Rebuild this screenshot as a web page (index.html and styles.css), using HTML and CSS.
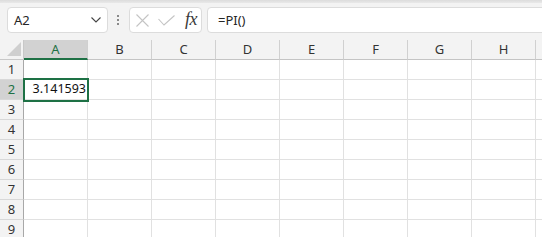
FILE: index.html
```html
<!DOCTYPE html>
<html>
<head>
<meta charset="utf-8">
<link rel="stylesheet" href="styles.css">
</head>
<body>
<div class="app">
  <div class="edge"></div>
  <div class="fbar">
    <div class="namebox">
      <span class="nb-text">A2</span>
      <svg class="chev" width="10" height="6" viewBox="0 0 10 6"><path d="M0.5 0.5 L5 5 L9.5 0.5" fill="none" stroke="#444" stroke-width="1.1"/></svg>
    </div>
    <div class="dots"><i></i><i></i><i></i></div>
    <div class="actions">
      <svg class="ic-x" width="13" height="13" viewBox="0 0 13 13"><path d="M0.5 0.5 L12.5 12.5 M12.5 0.5 L0.5 12.5" stroke="#c4c4c4" stroke-width="1.1" fill="none"/></svg>
      <svg class="ic-ok" width="17" height="11" viewBox="0 0 17 11"><path d="M0.5 4 L6 10 L16.5 0.5" stroke="#c4c4c4" stroke-width="1.1" fill="none"/></svg>
      <span class="fx">fx</span>
    </div>
    <div class="formula">=PI()</div>
  </div>
  <div class="grid">
    <div class="corner"><svg width="14" height="14" viewBox="0 0 14 14"><path d="M14 0 L14 14 L0 14 Z" fill="#cfcfcf"/></svg></div>
    <div class="ch sel">A</div>
    <div class="ch">B</div>
    <div class="ch">C</div>
    <div class="ch">D</div>
    <div class="ch">E</div>
    <div class="ch">F</div>
    <div class="ch">G</div>
    <div class="ch">H</div>
    <div class="ch"></div>

    <div class="rh">1</div><div class="c"></div><div class="c"></div><div class="c"></div><div class="c"></div><div class="c"></div><div class="c"></div><div class="c"></div><div class="c"></div><div class="c"></div>
    <div class="rh sel">2</div><div class="c num">3.141593</div><div class="c"></div><div class="c"></div><div class="c"></div><div class="c"></div><div class="c"></div><div class="c"></div><div class="c"></div><div class="c"></div>
    <div class="rh">3</div><div class="c"></div><div class="c"></div><div class="c"></div><div class="c"></div><div class="c"></div><div class="c"></div><div class="c"></div><div class="c"></div><div class="c"></div>
    <div class="rh">4</div><div class="c"></div><div class="c"></div><div class="c"></div><div class="c"></div><div class="c"></div><div class="c"></div><div class="c"></div><div class="c"></div><div class="c"></div>
    <div class="rh">5</div><div class="c"></div><div class="c"></div><div class="c"></div><div class="c"></div><div class="c"></div><div class="c"></div><div class="c"></div><div class="c"></div><div class="c"></div>
    <div class="rh">6</div><div class="c"></div><div class="c"></div><div class="c"></div><div class="c"></div><div class="c"></div><div class="c"></div><div class="c"></div><div class="c"></div><div class="c"></div>
    <div class="rh">7</div><div class="c"></div><div class="c"></div><div class="c"></div><div class="c"></div><div class="c"></div><div class="c"></div><div class="c"></div><div class="c"></div><div class="c"></div>
    <div class="rh">8</div><div class="c"></div><div class="c"></div><div class="c"></div><div class="c"></div><div class="c"></div><div class="c"></div><div class="c"></div><div class="c"></div><div class="c"></div>
    <div class="rh">9</div><div class="c"></div><div class="c"></div><div class="c"></div><div class="c"></div><div class="c"></div><div class="c"></div><div class="c"></div><div class="c"></div><div class="c"></div>

    <div class="selbox"></div>
  </div>
</div>
</body>
</html>
```

FILE: styles.css
```css
html, body {
  margin: 0;
  padding: 0;
  background: #ffffff;
}
* { box-sizing: border-box; }

.app {
  width: 542px;
  height: 237px;
  overflow: hidden;
  font-family: "Noto Sans", "Open Sans", sans-serif;
  color: #262626;
  background: #f3f3f3;
}

.edge {
  height: 3px;
  background: linear-gradient(#dcdcdc, #e9e9e9);
}

.fbar {
  display: flex;
  align-items: center;
  height: 37px;
  padding: 4px 0 7px 7px;
  background: #f3f3f3;
}

.namebox {
  width: 101px;
  height: 26px;
  flex: none;
  display: flex;
  align-items: center;
  justify-content: space-between;
  padding: 0 6px 0 6px;
  background: #fff;
  border: 1px solid #dcdcdc;
  border-radius: 4px;
  font-size: 13px;
}
.nb-text { line-height: 1; }
.chev { display: block; }

.dots {
  width: 3px;
  margin: 0 9px;
  display: flex;
  flex-direction: column;
  gap: 2px;
  flex: none;
}
.dots i {
  display: block;
  width: 2px;
  height: 2px;
  background: #8a8a8a;
}

.actions {
  width: 73px;
  height: 26px;
  flex: none;
  display: flex;
  align-items: center;
  padding: 0 0 0 6px;
  background: #fff;
  border: 1px solid #dcdcdc;
  border-radius: 4px;
}
.ic-x { display: block; margin-right: 9px; }
.ic-ok { display: block; margin-right: 10px; }
.fx {
  font-family: "Liberation Serif", "DejaVu Serif", serif;
  font-style: italic;
  font-size: 18px;
  color: #3a3a3a;
  line-height: 1;
  letter-spacing: -0.5px;
  margin-top: -2px;
}

.formula {
  flex: 1;
  height: 26px;
  margin-left: 5px;
  margin-right: -10px;
  display: flex;
  align-items: center;
  padding-left: 10px;
  font-size: 13px;
  background: #fff;
  border: 1px solid #dcdcdc;
  border-radius: 4px;
}

.grid {
  position: relative;
  display: grid;
  grid-template-columns: 24px repeat(8, 64px) 30px;
  grid-auto-rows: 20px;
  background: #fff;
  font-size: 13px;
}

.corner {
  background: #f3f3f3;
  border-right: 1px solid #c8c8c8;
  border-bottom: 1px solid #c8c8c8;
  display: flex;
  align-items: flex-end;
  justify-content: flex-end;
  padding: 0 2px 3px 0;
}
.corner svg { display: block; }

.ch {
  background: #f3f3f3;
  border-right: 1px solid #d0d0d0;
  border-bottom: 1px solid #c4c4c4;
  display: flex;
  align-items: center;
  justify-content: center;
  color: #333;
  line-height: 1;
}
.ch.sel {
  background: #d2d2d2;
  border-bottom: 2px solid #1e7145;
  color: #1e7145;
}

.rh {
  background: #f3f3f3;
  border-right: 1px solid #a8a8a8;
  border-bottom: 1px solid #d8d8d8;
  display: flex;
  align-items: center;
  justify-content: center;
  color: #333;
  line-height: 1;
}
.rh.sel {
  background: #d2d2d2;
  color: #1e7145;
}

.c {
  border-right: 1px solid #e1e1e1;
  border-bottom: 1px solid #e1e1e1;
  background: #fff;
}
.c.num {
  display: flex;
  align-items: center;
  justify-content: flex-end;
  padding-right: 1px;
  font-size: 12.5px;
  color: #111;
  line-height: 1;
}

.selbox {
  position: absolute;
  left: 23px;
  top: 38px;
  width: 66px;
  height: 24px;
  border: 2px solid #1e7145;
  pointer-events: none;
}
```
